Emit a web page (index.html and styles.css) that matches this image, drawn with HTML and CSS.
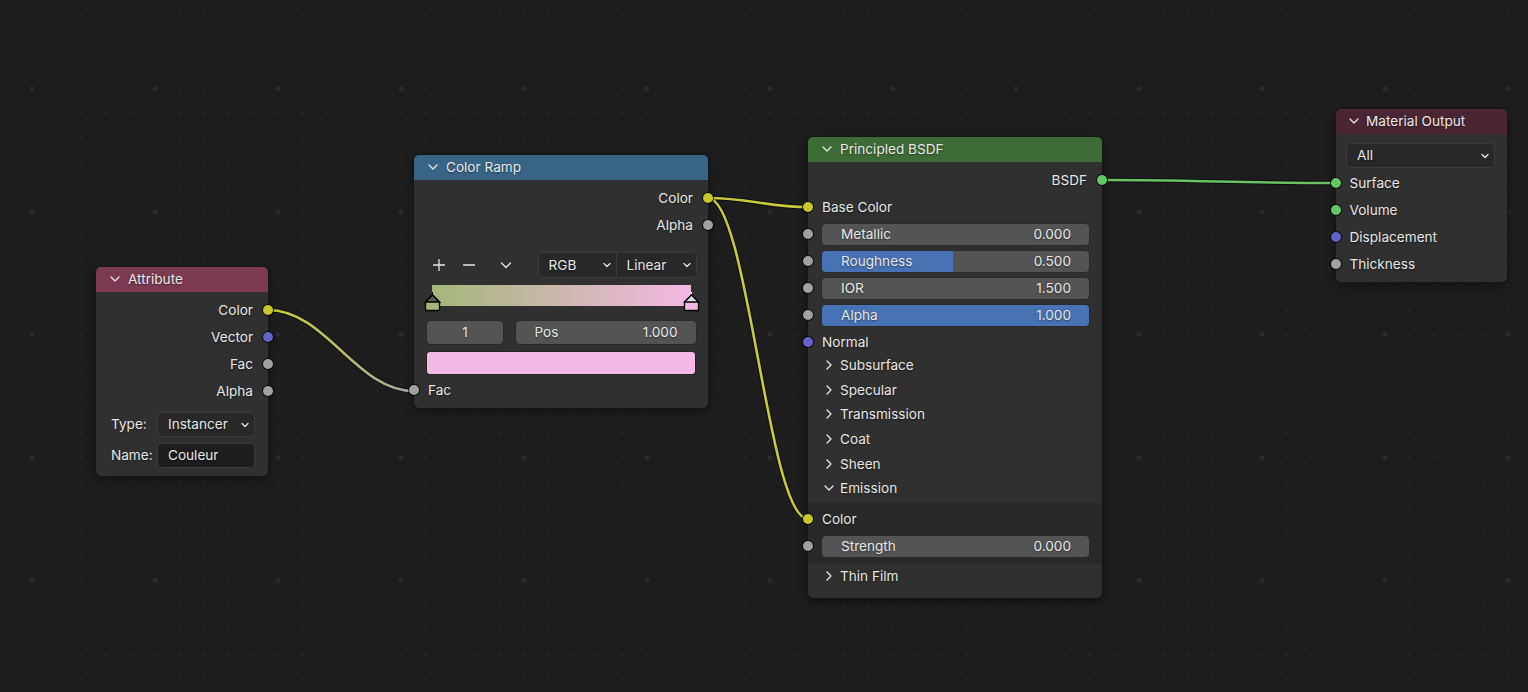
FILE: index.html
```html
<!DOCTYPE html>
<html lang="fr">
<head>
    <meta charset="UTF-8">
    <meta name="viewport" content="width=device-width, initial-scale=1.0">
    <title>Shader Editor</title>
    <link rel="stylesheet" href="styles.css">
</head>
<body>
    <div class="editor">
        <svg class="links" width="1528" height="692" viewBox="0 0 1528 692">
            <defs>
                <linearGradient id="fade" gradientUnits="userSpaceOnUse" x1="268" y1="0" x2="414" y2="0">
                    <stop offset="0" stop-color="#c9c93c"/>
                    <stop offset="0.3" stop-color="#c2c250"/>
                    <stop offset="1" stop-color="#a3a3a3"/>
                </linearGradient>
            </defs>
            <g class="link-shadow">
                <path d="M268 310 C326 310 356 391 414 391"/>
                <path d="M708 198 C748 198 768 207 808 207"/>
                <path d="M708 198 C748 198 768 519 808 519"/>
                <path d="M1102 180 C1195 180 1242 183 1336 183"/>
            </g>
            <path class="link" stroke="url(#fade)" d="M268 310 C326 310 356 391 414 391"/>
            <path class="link yellow" d="M708 198 C748 198 768 207 808 207"/>
            <path class="link yellow" d="M708 198 C748 198 768 519 808 519"/>
            <path class="link green" d="M1102 180 C1195 180 1242 183 1336 183"/>
        </svg>

        <!-- Attribute -->
        <div class="node node-attribute">
            <div class="node-header">
                <svg class="chev" width="10" height="10" viewBox="0 0 10 10"><path d="M1 3 L5 7 L9 3"/></svg>
                <span>Attribute</span>
            </div>
            <div class="node-body">
                <div class="row out">Color<i class="socket yellow"></i></div>
                <div class="row out">Vector<i class="socket blue"></i></div>
                <div class="row out">Fac<i class="socket grey"></i></div>
                <div class="row out">Alpha<i class="socket grey"></i></div>
                <div class="prop">
                    <span class="prop-label">Type:</span>
                    <div class="select">Instancer
                        <svg class="drop" width="8" height="8" viewBox="0 0 8 8"><path d="M1 2.5 L4 5.5 L7 2.5"/></svg>
                    </div>
                </div>
                <div class="prop">
                    <span class="prop-label">Name:</span>
                    <div class="text-field">Couleur</div>
                </div>
            </div>
        </div>

        <!-- Color Ramp -->
        <div class="node node-ramp">
            <div class="node-header">
                <svg class="chev" width="10" height="10" viewBox="0 0 10 10"><path d="M1 3 L5 7 L9 3"/></svg>
                <span>Color Ramp</span>
            </div>
            <div class="node-body">
                <div class="row out">Color<i class="socket yellow"></i></div>
                <div class="row out">Alpha<i class="socket grey"></i></div>
                <div class="ramp-tools">
                    <span class="tool"><svg width="12" height="12" viewBox="0 0 12 12"><path d="M6 0.5 V11.5 M0.5 6 H11.5"/></svg></span>
                    <span class="tool"><svg width="12" height="12" viewBox="0 0 12 12"><path d="M0.5 6 H11.5"/></svg></span>
                    <span class="tool"><svg width="12" height="12" viewBox="0 0 12 12"><path d="M1.5 4 L6 8.5 L10.5 4"/></svg></span>
                    <div class="select-group">
                        <div class="select rgb">RGB
                            <svg class="drop" width="8" height="8" viewBox="0 0 8 8"><path d="M1 2.5 L4 5.5 L7 2.5"/></svg>
                        </div>
                        <div class="select linear">Linear
                            <svg class="drop" width="8" height="8" viewBox="0 0 8 8"><path d="M1 2.5 L4 5.5 L7 2.5"/></svg>
                        </div>
                    </div>
                </div>
                <div class="ramp">
                    <svg class="stop stop-left" width="17" height="20" viewBox="0 0 17 20">
                        <path d="M8.5 0 V3" stroke="#000" stroke-width="1"/>
                        <path d="M1.5 18.5 V10 L8.5 3 L15.5 10 V18.5 Z" fill="#a3b77b" stroke="#000" stroke-width="1.3"/>
                        <path d="M1.5 10 L8.5 3 L15.5 10 Z" fill="#5a5a5a" stroke="#000" stroke-width="1.3"/>
                    </svg>
                    <svg class="stop stop-right" width="17" height="20" viewBox="0 0 17 20">
                        <path d="M8.5 0 V3" stroke="#fff" stroke-width="1"/>
                        <path d="M1.5 18.5 V10 L8.5 3 L15.5 10 V18.5 Z" fill="#f4b8e4" stroke="#000" stroke-width="1.3"/>
                        <path d="M1.5 10 L8.5 3 L15.5 10 Z" fill="#dcdcdc" stroke="#000" stroke-width="1.3"/>
                    </svg>
                </div>
                <div class="ramp-fields">
                    <div class="field index">1</div>
                    <div class="field pos"><span>Pos</span><span>1.000</span></div>
                </div>
                <div class="swatch"></div>
                <div class="row in">Fac<i class="socket grey"></i></div>
            </div>
        </div>

        <!-- Principled BSDF -->
        <div class="node node-bsdf">
            <div class="node-header">
                <svg class="chev" width="10" height="10" viewBox="0 0 10 10"><path d="M1 3 L5 7 L9 3"/></svg>
                <span>Principled BSDF</span>
            </div>
            <div class="node-body">
                <div class="row out">BSDF<i class="socket green"></i></div>
                <div class="row in">Base Color<i class="socket yellow"></i></div>
                <div class="row in slider-row"><i class="socket grey"></i>
                    <div class="slider"><span>Metallic</span><span>0.000</span></div>
                </div>
                <div class="row in slider-row"><i class="socket grey"></i>
                    <div class="slider"><b class="fill" style="width: 49%"></b><span>Roughness</span><span>0.500</span></div>
                </div>
                <div class="row in slider-row"><i class="socket grey"></i>
                    <div class="slider"><span>IOR</span><span>1.500</span></div>
                </div>
                <div class="row in slider-row"><i class="socket grey"></i>
                    <div class="slider"><b class="fill" style="width: 100%"></b><span>Alpha</span><span>1.000</span></div>
                </div>
                <div class="row in">Normal<i class="socket blue"></i></div>
                <div class="panels">
                    <div class="panel"><svg class="chev" width="10" height="10" viewBox="0 0 10 10"><path d="M3 1 L7 5 L3 9"/></svg>Subsurface</div>
                    <div class="panel"><svg class="chev" width="10" height="10" viewBox="0 0 10 10"><path d="M3 1 L7 5 L3 9"/></svg>Specular</div>
                    <div class="panel"><svg class="chev" width="10" height="10" viewBox="0 0 10 10"><path d="M3 1 L7 5 L3 9"/></svg>Transmission</div>
                    <div class="panel"><svg class="chev" width="10" height="10" viewBox="0 0 10 10"><path d="M3 1 L7 5 L3 9"/></svg>Coat</div>
                    <div class="panel"><svg class="chev" width="10" height="10" viewBox="0 0 10 10"><path d="M3 1 L7 5 L3 9"/></svg>Sheen</div>
                    <div class="panel"><svg class="chev" width="10" height="10" viewBox="0 0 10 10"><path d="M1 3 L5 7 L9 3"/></svg>Emission</div>
                </div>
                <div class="panel-body">
                    <div class="row in">Color<i class="socket yellow"></i></div>
                    <div class="row in slider-row"><i class="socket grey"></i>
                        <div class="slider"><span>Strength</span><span>0.000</span></div>
                    </div>
                </div>
                <div class="panel"><svg class="chev" width="10" height="10" viewBox="0 0 10 10"><path d="M3 1 L7 5 L3 9"/></svg>Thin Film</div>
            </div>
        </div>

        <!-- Material Output -->
        <div class="node node-output">
            <div class="node-header">
                <svg class="chev" width="10" height="10" viewBox="0 0 10 10"><path d="M1 3 L5 7 L9 3"/></svg>
                <span>Material Output</span>
            </div>
            <div class="node-body">
                <div class="select target">All
                    <svg class="drop" width="8" height="8" viewBox="0 0 8 8"><path d="M1 2.5 L4 5.5 L7 2.5"/></svg>
                </div>
                <div class="row in">Surface<i class="socket green"></i></div>
                <div class="row in">Volume<i class="socket green"></i></div>
                <div class="row in">Displacement<i class="socket blue"></i></div>
                <div class="row in">Thickness<i class="socket grey"></i></div>
            </div>
        </div>
    </div>
</body>
</html>
```

FILE: styles.css
```css
body {
    margin: 0;
    background-color: #1d1d1d;
    font-family: Inter, "Noto Sans", sans-serif;
    font-size: 13.6px;
    color: #e6e6e6;
}
.editor {
    position: relative;
    width: 1528px;
    height: 692px;
    overflow: hidden;
    background-color: #1d1d1d;
    background-image:
        radial-gradient(circle, #2b2b2b 0, #2b2b2b 2px, transparent 2.7px),
        radial-gradient(circle, #252525 0, #252525 1.1px, transparent 1.7px);
    background-size: 123px 123px, 24.6px 24.6px;
    background-position: -29.5px 27.1px, -4.8px 2.7px;
}
.links {
    position: absolute;
    left: 0;
    top: 0;
}
.links path {
    fill: none;
}
.link-shadow path {
    stroke: rgba(0, 0, 0, 0.55);
    stroke-width: 4.6;
}
.link {
    stroke-width: 2.6;
}
.link.yellow {
    stroke: #c9c93c;
}
.link.green {
    stroke: #6bc262;
}

/* nodes */
.node {
    position: absolute;
    background-color: #303030;
    border-radius: 5px;
    box-shadow: 0 0 0 1px #161616, 0 3px 10px rgba(0, 0, 0, 0.45);
    text-shadow: 0 1px 2px rgba(0, 0, 0, 0.45);
}
.node-attribute {
    left: 96px;
    top: 267px;
    width: 172px;
}
.node-ramp {
    left: 414px;
    top: 155px;
    width: 294px;
}
.node-bsdf {
    left: 808px;
    top: 137px;
    width: 294px;
}
.node-output {
    left: 1335.5px;
    top: 109px;
    width: 171.5px;
}
.node-header {
    height: 24.5px;
    display: flex;
    align-items: center;
    gap: 8px;
    padding-left: 14px;
    border-radius: 5px 5px 0 0;
    color: #e8e8e8;
}
.node-output .node-header {
    padding-left: 13px;
    gap: 7.5px;
}
.node-attribute .node-header { background-color: #7b3a51; }
.node-ramp .node-header { background-color: #386586; }
.node-bsdf .node-header { background-color: #3d6b35; }
.node-output .node-header { background-color: #4a2533; }

.chev path,
.drop path,
.tool path {
    fill: none;
    stroke: #e6e6e6;
    stroke-width: 1.3;
    stroke-linecap: round;
    stroke-linejoin: round;
}
.node-body {
    padding-top: 5px;
}

/* sockets */
.row {
    position: relative;
    height: 27px;
    display: flex;
    align-items: center;
}
.row.out {
    justify-content: flex-end;
    padding-right: 15px;
}
.row.in {
    padding-left: 14px;
}
.socket {
    position: absolute;
    top: 50%;
    width: 10px;
    height: 10px;
    margin-top: -5px;
    border-radius: 50%;
    box-shadow: 0 0 0 1px rgba(0, 0, 0, 0.75);
}
.out .socket { right: -5px; }
.in .socket { left: -5px; }
.socket.yellow { background-color: #c7c729; }
.socket.blue { background-color: #6363c7; }
.socket.grey { background-color: #a1a1a1; }
.socket.green { background-color: #63c763; }

/* widgets */
.select {
    position: relative;
    display: flex;
    align-items: center;
    height: 23px;
    padding-left: 10px;
    background-color: #282828;
    border-radius: 4px;
    box-shadow: 0 0 0 1px #3b3b3b;
    box-sizing: border-box;
}
.select .drop {
    position: absolute;
    right: 5px;
    top: 8px;
}
.text-field {
    flex: 1;
    display: flex;
    align-items: center;
    height: 23px;
    padding-left: 10px;
    background-color: #1d1d1d;
    border-radius: 4px;
    box-shadow: 0 0 0 1px #3b3b3b;
}
.prop {
    display: flex;
    align-items: center;
    padding: 0 14px 0 15px;
    margin-top: 8px;
}
.prop-label {
    width: 47px;
}
.prop .select {
    flex: 1;
}
.node-attribute .node-body {
    padding-bottom: 9px;
}

/* color ramp */
.node-ramp .node-body {
    padding-top: 4.5px;
    padding-bottom: 4.5px;
}
.ramp-tools {
    display: flex;
    align-items: center;
    height: 24px;
    margin-top: 15px;
    padding-left: 13px;
    padding-right: 12.5px;
}
.tool {
    width: 24px;
    height: 24px;
    display: flex;
    align-items: center;
    justify-content: center;
    margin-right: 6px;
}
.tool:nth-child(3) {
    margin-left: 7px;
}
.select-group {
    display: flex;
    margin-left: auto;
}
.select-group .select {
    height: 24px;
}
.select.rgb {
    width: 77px;
    border-radius: 4px 0 0 4px;
    margin-right: 1px;
}
.select.linear {
    width: 79px;
    border-radius: 0 4px 4px 0;
}
.ramp {
    position: relative;
    height: 20.5px;
    margin: 8px 17px 0 18px;
    background: linear-gradient(to right, #a3b77b, #f4b8e4);
}
.stop {
    position: absolute;
    top: 7px;
}
.stop-left { left: -8.5px; }
.stop-right { right: -8.5px; }
.ramp-fields {
    display: flex;
    gap: 12.5px;
    margin: 15px 12.5px 0 13px;
}
.field {
    height: 23px;
    display: flex;
    align-items: center;
    background-color: #545454;
    border-radius: 4px;
    box-shadow: 0 0 0 1px #2a2a2a;
}
.field.index {
    width: 76px;
    justify-content: center;
}
.field.pos {
    flex: 1;
    justify-content: space-between;
    padding: 0 18px 0 19px;
}
.swatch {
    height: 22.5px;
    margin: 8px 13px 0 13px;
    background-color: #f4b8e4;
    border-radius: 3px;
    box-shadow: 0 0 0 1px #242424;
}
.node-ramp .row.in {
    margin-top: 2.5px;
}

/* principled */
.slider-row {
    padding-right: 13px;
}
.slider {
    flex: 1;
    position: relative;
    height: 21px;
    display: flex;
    align-items: center;
    justify-content: space-between;
    padding: 0 18px 0 19px;
    background-color: #545454;
    border-radius: 4px;
    box-shadow: 0 0 0 1px #2a2a2a;
    overflow: hidden;
}
.slider .fill {
    position: absolute;
    left: 0;
    top: 0;
    bottom: 0;
    background-color: #4772b3;
}
.slider span {
    position: relative;
}
.panels {
    margin-top: -2.5px;
}
.panel {
    height: 24.6px;
    display: flex;
    align-items: center;
    gap: 6px;
    padding-left: 16px;
}
.panel-body {
    margin-top: 2.5px;
    padding: 2.5px 0 4.5px;
    background-color: #292929;
}
.node-bsdf .node-body {
    padding-bottom: 9px;
}

/* output */
.select.target {
    margin: 5px 13px 0 11.5px;
}
.node-output .select.target + .row {
    margin-top: 2.5px;
}
.node-output .node-body {
    padding-bottom: 4.5px;
}
```
